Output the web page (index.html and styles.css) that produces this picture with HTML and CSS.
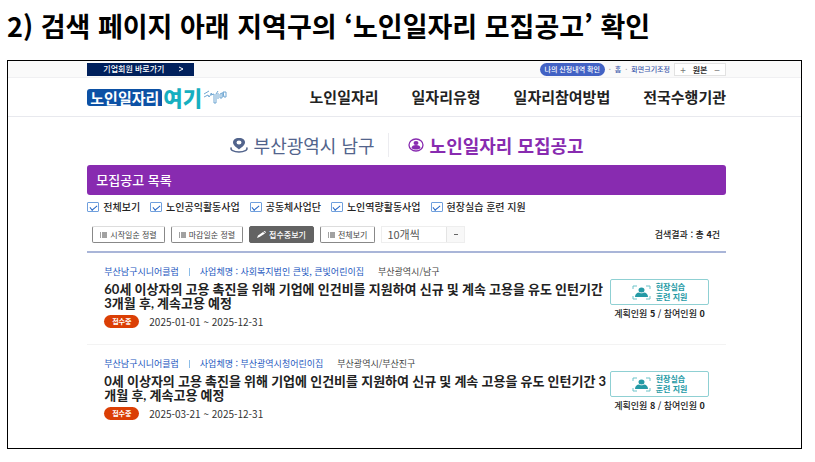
FILE: index.html
```html
<!DOCTYPE html>
<html lang="ko">
<head>
  <meta charset="UTF-8">
  <meta name="viewport" content="width=device-width, initial-scale=1.0">
  <title>노인일자리 모집공고</title>
  <link rel="stylesheet" href="styles.css">
</head>
<body>
<h1 class="guide-title">2) 검색 페이지 아래 지역구의 ‘노인일자리 모집공고’ 확인</h1>

<div class="frame">
  <div class="topbar">
    <a class="company-link" href="#">기업회원 바로가기
      <svg width="6" height="6" viewBox="0 0 6 6"><path d="M1 1l4 2-4 2" fill="none" stroke="#fff"/></svg>
    </a>
    <div class="util">
      <a class="my-apply" href="#">나의 신청내역 확인</a>
      <span class="dot">·</span>
      <a href="#">홈</a>
      <span class="dot">·</span>
      <span class="zoom-label">화면크기조정</span>
      <div class="zoom-box">
        <button type="button" aria-label="확대">+</button>
        <button type="button" class="zoom-reset">원본</button>
        <button type="button" aria-label="축소">−</button>
      </div>
    </div>
  </div>

  <header class="header">
    <a class="logo" href="#">
      <span class="logo-bubble">노인일자리</span>
      <span class="logo-here">여기</span>
      <svg class="logo-hand" width="24" height="16" viewBox="0 0 24 16" fill="none" stroke="#6fa6d2">
        <path d="M1 5l5-3M1 8l4-2 1 2 3-4M8 4v2l3-1v9h2V5l2-3M15 4v6M17 5l2-1v5h-2zM20 3h3v5h-2zM20 3v5"/>
      </svg>
    </a>
    <nav class="nav">
      <a href="#">노인일자리</a>
      <a href="#">일자리유형</a>
      <a href="#">일자리참여방법</a>
      <a href="#">전국수행기관</a>
    </nav>
  </header>

  <main class="content">
    <div class="region">
      <div class="region-name">
        <svg width="18" height="16" viewBox="0 0 18 16">
          <path d="M1.500 10.500C-.5 13 4 15 9 15s9.500-2 7.500-4.500" fill="none" stroke="#52648c" stroke-width="1.500"/>
          <path fill-rule="evenodd" d="M9 1C5 1 3 3 3 5.500 3 8.500 7 10.500 9 12.500c2-2 6-4 6-7C15 3 13 1 9 1zm0 2.500a2.500 2 0 1 1 0 4 2.500 2 0 0 1 0-4z" fill="#52648c"/>
        </svg>
        <span>부산광역시 남구</span>
      </div>
      <h2 class="region-title">
        <svg width="16" height="14" viewBox="0 0 16 14">
          <ellipse cx="8" cy="7" rx="7" ry="6" fill="none" stroke="#882bb0" stroke-width="1.300"/>
          <ellipse cx="8" cy="5" rx="2.500" ry="2" fill="#882bb0"/>
          <path d="M3.500 10c0-2 2-3 4.500-3s4.500 1 4.500 3c-2 2-7 2-9 0z" fill="#882bb0"/>
        </svg>
        <span>노인일자리 모집공고</span>
      </h2>
    </div>

    <h3 class="list-title">모집공고 목록</h3>

    <div class="filters">
      <label><input type="checkbox" checked>전체보기</label>
      <label><input type="checkbox" checked>노인공익활동사업</label>
      <label><input type="checkbox" checked>공동체사업단</label>
      <label><input type="checkbox" checked>노인역량활동사업</label>
      <label><input type="checkbox" checked>현장실습 훈련 지원</label>
    </div>

    <div class="tools">
      <button type="button" class="btn">
        <svg width="7" height="6" viewBox="0 0 7 6"><path d="M0 1h1m1 0h5M0 3h1m1 0h5M0 5h1m1 0h5" stroke="currentColor"/></svg>시작일순 정렬
      </button>
      <button type="button" class="btn">
        <svg width="7" height="6" viewBox="0 0 7 6"><path d="M0 1h1m1 0h5M0 3h1m1 0h5M0 5h1m1 0h5" stroke="currentColor"/></svg>마감일순 정렬
      </button>
      <button type="button" class="btn btn-on">
        <svg width="9" height="7" viewBox="0 0 9 7"><path d="M0 7l1-2.500L6 1l2 1.500L2.500 6zM6.500.5L7.500 0 9 1l-.5 1z" fill="#fff"/></svg>접수중보기
      </button>
      <button type="button" class="btn">
        <svg width="7" height="6" viewBox="0 0 7 6"><path d="M0 1h1m1 0h5M0 3h1m1 0h5M0 5h1m1 0h5" stroke="currentColor"/></svg>전체보기
      </button>
      <div class="page-size">
        <select aria-label="목록 개수">
          <option>10개씩</option>
          <option>20개씩</option>
        </select>
        <span class="page-arrow"></span>
      </div>
      <p class="result">검색결과 : 총 <b>4</b>건</p>
    </div>

    <ul class="jobs">
      <li class="job">
        <div class="job-info">
          <p class="job-meta">
            <span>부산남구시니어클럽</span><i class="bar"></i><span>사업체명 : 사회복지법인 큰빛, 큰빛어린이집</span>
            <span class="job-area">부산광역시/남구</span>
          </p>
          <a class="job-title" href="#">60세 이상자의 고용 촉진을 위해 기업에 인건비를 지원하여 신규 및 계속 고용을 유도 인턴기간<br>3개월 후, 계속고용 예정</a>
          <p class="job-date"><span class="badge">접수중</span>2025-01-01 ~ 2025-12-31</p>
        </div>
        <div class="job-side">
          <div class="kind">
            <svg width="19" height="15" viewBox="0 0 19 15">
              <path d="M1 4V1h4M14 1h4v3M1 11v3h4M14 14h4v-3" fill="none" stroke="#6cc3c8"/>
              <ellipse cx="9.500" cy="5" rx="3" ry="2.500" fill="#249aa5"/>
              <path d="M3 12c0-3 2-4.500 4-4.500 1 1 4 1 5 0 2 0 4 1.500 4 4.500z" fill="#249aa5"/>
            </svg>
            <span>현장실습<br>훈련 지원</span>
          </div>
          <p class="count">계획인원 <b>5</b> / 참여인원 <b>0</b></p>
        </div>
      </li>
      <li class="job">
        <div class="job-info">
          <p class="job-meta">
            <span>부산남구시니어클럽</span><i class="bar"></i><span>사업체명 : 부산광역시청어린이집</span>
            <span class="job-area">부산광역시/부산진구</span>
          </p>
          <a class="job-title" href="#">0세 이상자의 고용 촉진을 위해 기업에 인건비를 지원하여 신규 및 계속 고용을 유도 인턴기간 3<br>개월 후, 계속고용 예정</a>
          <p class="job-date"><span class="badge">접수중</span>2025-03-21 ~ 2025-12-31</p>
        </div>
        <div class="job-side">
          <div class="kind">
            <svg width="19" height="15" viewBox="0 0 19 15">
              <path d="M1 4V1h4M14 1h4v3M1 11v3h4M14 14h4v-3" fill="none" stroke="#6cc3c8"/>
              <ellipse cx="9.500" cy="5" rx="3" ry="2.500" fill="#249aa5"/>
              <path d="M3 12c0-3 2-4.500 4-4.500 1 1 4 1 5 0 2 0 4 1.500 4 4.500z" fill="#249aa5"/>
            </svg>
            <span>현장실습<br>훈련 지원</span>
          </div>
          <p class="count">계획인원 <b>8</b> / 참여인원 <b>0</b></p>
        </div>
      </li>
    </ul>
  </main>
</div>
</body>
</html>
```
FILE: styles.css
```css
* { box-sizing: border-box; }
body { margin: 0; padding: 8px 13px 12px 7px; background: #fff; color: #222; font-family: "Noto Sans CJK KR", sans-serif; font-size: 10px; line-height: 12px; }
h1, h2, h3, p, ul { margin: 0; padding: 0; }
a { color: inherit; text-decoration: none; }
button, select { font-family: inherit; margin: 0; }
svg { flex: none; }

.guide-title { font-size: 27px; line-height: 36px; font-weight: 700; color: #000; margin-bottom: 16px; }
.frame { border: 1px solid #000; padding-bottom: 28px; }

/* top bar */
.topbar { display: flex; justify-content: space-between; align-items: center; height: 17px; padding: 0 75px 0 10%; background: #fafafa; border-bottom: 1px solid #f0f0f2; }
.company-link { display: flex; align-items: center; justify-content: space-between; width: 107px; height: 13px; padding: 0 10px 0 16px; background: #00205c; color: #fff; font-size: 8px; font-weight: 500; }
.util { display: flex; align-items: center; gap: 4px; font-size: 7px; font-weight: 500; color: #3f5cae; }
.my-apply { width: 65px; height: 13px; line-height: 13px; border-radius: 7px; background: #4262c4; color: #fff; text-align: center; }
.dot { color: #aaa; }
.zoom-box { display: flex; border: 1px solid #e2e2e2; background: #fff; height: 13px; }
.zoom-box button { width: 16px; padding: 0; border: 0; background: none; font-size: 10px; line-height: 11px; color: #777; }
.zoom-box .zoom-reset { width: 18px; font-size: 8px; font-weight: 700; color: #333; }

/* header */
.header { display: flex; justify-content: space-between; align-items: center; height: 39px; padding: 0 75px 0 10%; border-bottom: 1px solid #e8e9ee; }
.logo { display: flex; align-items: center; }
.logo-bubble { padding: 0 3px; border-radius: 3px 3px 0 3px; background: #0c51a5; color: #fff; font-size: 15px; line-height: 17px; font-weight: 700; }
.logo-here { margin-left: 1px; font-size: 21px; line-height: 18px; font-weight: 900; color: #16afc0; }
.logo-hand { margin-left: 1px; }
.nav { display: flex; gap: 33px; font-size: 15px; line-height: 20px; font-weight: 700; color: #222; }

/* region heading */
.content { padding: 0 75px 0 10%; }
.region { display: flex; justify-content: center; align-items: center; height: 48px; padding-top: 7px; font-size: 18px; line-height: 24px; }
.region-name, .region-title { display: flex; align-items: center; gap: 6px; }
.region-name { padding-right: 13px; border-right: 1px solid #ececf0; color: #52648c; }
.region-title { padding-left: 19px; font-size: 18px; font-weight: 700; color: #882bb0; }
.list-title { padding: 0 9px; border-radius: 3px; background: #882bb0; color: #fff; font-size: 13px; line-height: 30px; font-weight: 500; }

/* filters */
.filters { display: flex; gap: 10px; padding-top: 6px; }
.filters label { display: flex; align-items: center; gap: 4px; font-weight: 500; }
.filters input { appearance: none; width: 12px; height: 10px; margin: 0; border: 1px solid #6f9fdd; border-radius: 1px; display: grid; place-items: center; }
.filters input:checked::before { content: ""; width: 6px; height: 3px; border: solid #1f62c4; border-width: 0 0 1px 1px; transform: rotate(-40deg); }

.tools { display: flex; align-items: center; gap: 6px; margin-top: 13px; padding: 0 6px 8px 5px; border-bottom: 2px solid #a9b5d8; }
.btn { display: flex; align-items: center; justify-content: center; gap: 3px; height: 17px; padding: 0 7px; border: 1px solid #888; border-top-color: #ddd; border-radius: 2px; background: #fff; color: #444; font-size: 8px; line-height: 12px; }
.btn-on { background: #636363; border-color: #636363; color: #fff; font-weight: 500; }
.page-size { display: flex; width: 84px; height: 17px; border: 1px solid #eee; }
.page-size select { appearance: none; flex: 1; min-width: 0; padding: 0 5px; border: 0; background: #fff; color: #555; font-size: 11px; line-height: 15px; }
.page-arrow { display: grid; place-items: center; width: 18px; border-left: 1px solid #e4e4e4; background: #f8f8f8; }
.page-arrow::before { content: ""; width: 4px; height: 1px; background: #666; }
.result { margin-left: auto; font-size: 9px; font-weight: 500; }

/* job list */
.jobs { list-style: none; }
.job { display: flex; justify-content: space-between; padding: 13px 17px 16px; border-bottom: 1px solid #f3f3f3; }
.job:last-child { padding-bottom: 0; border-bottom: 0; }
.job-info { flex: 0 1 506px; }
.job-meta { display: flex; align-items: center; font-size: 9px; color: #2458c0; }
.bar { width: 1px; height: 8px; margin: 0 10px; background: #8cbde8; }
.job-area { margin-left: 14px; color: #444; }
.job-title { display: block; margin-top: 4px; font-family: Lato, "Noto Sans CJK KR", sans-serif; font-size: 13px; line-height: 14px; font-weight: 700; color: #222; }
.job-date { display: flex; align-items: center; gap: 10px; margin-top: 5px; line-height: 13px; color: #333; }
.badge { width: 35px; border-radius: 7px; background: #db3f05; color: #fff; font-size: 7px; font-weight: 700; text-align: center; }
.job-side { width: 99px; padding-top: 13px; text-align: center; }
.kind { display: flex; align-items: center; justify-content: center; gap: 5px; height: 26px; border: 1px solid #8fd0d3; border-radius: 2px; color: #249aa5; font-size: 8px; line-height: 10px; font-weight: 700; text-align: left; }
.count { margin-top: 3px; font-size: 9px; font-weight: 500; white-space: nowrap; }
```
